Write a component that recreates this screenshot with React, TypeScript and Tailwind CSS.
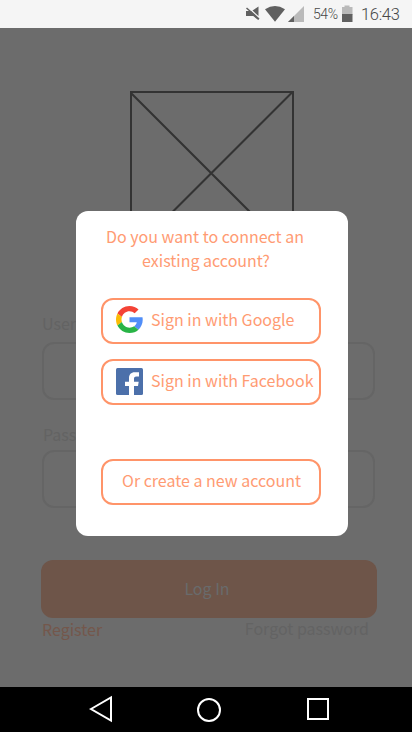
import type { ReactNode } from "react";

function StatusBar() {
  return (
    <header className="flex h-7 shrink-0 items-center bg-[#f5f5f5] pl-[245px] font-['Roboto',sans-serif] text-[#606060]">
      <svg className="h-7 w-[62px] shrink-0" viewBox="245 0 62 28">
        <path d="M246 11h5l8 8-.8 1-5-4H246z M252.500 10.500l6-4v9.500z" fill="#606060" />
        <path d="M246.500 8l12.500 11" stroke="#606060" strokeWidth="1.500" />
        <path d="M265 9.300Q275 2.500 285 9.300L275 21.700z" fill="#606060" />
        <path d="M304 6v16h-16z" fill="#bababa" />
        <path d="M294 16v6h-6z" fill="#606060" />
      </svg>
      <span className="ml-[6px] w-[28px] text-[14px] leading-7 font-light tracking-[-0.400px] whitespace-nowrap text-[#484848]">54%</span>
      <svg className="h-7 w-3 shrink-0" viewBox="341 0 12 28">
        <path d="M342 7h2.500V5.500h5V7h3v8H342z" fill="#bababa" />
        <path d="M342 14h10.500v8H342z" fill="#606060" />
      </svg>
      <span className="ml-[8px] pt-[2px] text-[16.500px] leading-7 font-light tracking-[-0.300px] whitespace-nowrap text-[#484848]">16:43</span>
    </header>
  );
}

function GoogleLogo() {
  return (
    <svg className="size-[27px] shrink-0" viewBox="0 0 48 48">
      <path
        fill="#f44336"
        d="M24 9.500c3.540 0 6.710 1.220 9.210 3.600l6.850-6.850C35.900 2.380 30.470 0 24 0 14.620 0 6.510 5.380 2.560 13.220l7.980 6.190C12.430 13.720 17.740 9.500 24 9.500z"
      />
      <path
        fill="#518ef8"
        d="M47.500 24.550c0-1.570-.15-3.090-.38-4.550H24v9.020h12.940c-.58 2.960-2.260 5.480-4.780 7.180l7.730 6c4.510-4.180 7.610-10.360 7.610-17.650z"
      />
      <path
        fill="#fbbc05"
        d="M10.530 28.590c-.48-1.450-.76-2.990-.76-4.590s.27-3.140.76-4.590l-7.980-6.190C.92 16.460 0 20.120 0 24c0 3.880.92 7.540 2.560 10.780l7.970-6.190z"
      />
      <path
        fill="#28b446"
        d="M24 48c6.480 0 11.930-2.130 15.890-5.810l-7.730-6c-2.150 1.450-4.920 2.300-8.160 2.300-6.260 0-11.570-4.220-13.470-9.910l-7.980 6.190C6.510 42.620 14.620 48 24 48z"
      />
    </svg>
  );
}

function FacebookLogo() {
  return (
    <svg className="mt-px size-[27px] shrink-0" viewBox="0 0 27 27">
      <rect width="27" height="27" rx="1.500" fill="#4c70aa" />
      <path d="M13 27V18H9v-4.300h4v-3.500C13 6.500 15 4.300 18.700 4.300H23v4.200h-2.500C18.300 8.500 18 9.500 18 11v2.700h4.700L22 18h-4v9z" fill="#fff" />
    </svg>
  );
}

function AccountButton({ icon, children }: { icon?: ReactNode; children: ReactNode }) {
  return (
    <button
      className={`flex h-[46px] w-[220px] shrink-0 rounded-xl border-2 border-[#ff9469] text-[16px] leading-[38px] whitespace-nowrap ${
        icon ? "gap-2 pl-[13px]" : "justify-center pl-px"
      }`}
    >
      {icon && <span className="mt-[6px] shrink-0">{icon}</span>}
      <span>{children}</span>
    </button>
  );
}

function Field({ label, className, labelClass }: { label: string; className: string; labelClass: string }) {
  return (
    <label className={`block text-[#636363] ${className}`}>
      <span className={`block text-[16px] leading-6 ${labelClass}`}>{label}</span>
      <span className="block h-[58px] w-[333px] rounded-xl border-2 border-[#656565]" />
    </label>
  );
}

function LoginScreen() {
  return (
    <main className="flex h-[659px] flex-col bg-[#6c6c6c] pl-[42px]">
      <svg className="mt-[63px] ml-[88px] size-[164px] shrink-0" viewBox="0 0 164 164" fill="none" stroke="#333" strokeWidth="2">
        <path d="M1 1h162v162H1zM1 2l162 162M162.500 1L0.500 163" />
      </svg>
      <Field label="Username" className="mt-[56px]" labelClass="h-[31px]" />
      <Field label="Password" className="mt-[22px]" labelClass="h-[28px] pl-px" />
      <button className="-ml-px mt-[52px] h-[58px] w-[336px] shrink-0 rounded-xl bg-[#6e5549] pr-1 pb-[2px] text-[16px] leading-[56px] text-[#696b6c]">
        Log In
      </button>
      <div className="-mt-[2px] flex w-[327px] justify-between text-[16px] leading-6">
        <span className="pt-px text-[#74574b]">Register</span>
        <span className="text-[#636363]">Forgot password</span>
      </div>
    </main>
  );
}

function AccountDialog() {
  return (
    <section
      role="dialog"
      className="absolute top-[211px] left-[76px] flex h-[325px] w-[272px] flex-col rounded-xl bg-white pl-[25px] text-[#ff9b73]"
    >
      <p className="mt-[13px] h-[74px] w-[208px] text-center text-[16px] leading-6 whitespace-nowrap">
        Do you want to connect an
        <br />
        <span className="pl-[2px]">existing account?</span>
      </p>
      <AccountButton icon={<GoogleLogo />}>Sign in with Google</AccountButton>
      <div className="h-[15px] shrink-0" />
      <AccountButton icon={<FacebookLogo />}>Sign in with Facebook</AccountButton>
      <div className="h-[54px] shrink-0" />
      <AccountButton>Or create a new account</AccountButton>
    </section>
  );
}

function NavigationBar() {
  return (
    <nav className="flex h-[45px] justify-center bg-black">
      <svg className="h-[45px] w-[412px]" viewBox="0 687 412 45" fill="none" stroke="#fff" strokeWidth="2">
        <path d="M91 709l20-11.500v23z" />
        <circle cx="209" cy="710" r="11" />
        <path d="M308 699h20v20h-20z" />
      </svg>
    </nav>
  );
}

export default function App() {
  return (
    <div className="relative h-[732px] w-[412px] overflow-hidden font-['Noto_Sans_CJK_SC',sans-serif]">
      <StatusBar />
      <LoginScreen />
      <NavigationBar />
      <AccountDialog />
    </div>
  );
}
